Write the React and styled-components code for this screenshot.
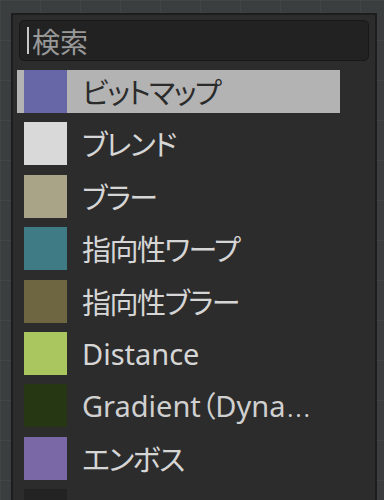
import React from "react";
import styled, { createGlobalStyle } from "styled-components";

const Global = createGlobalStyle`
  html, body { margin: 0; padding: 0; height: 100%; overflow: hidden; }
  body {
    background-color: #3b3e3e;
    background-image:
      linear-gradient(to right, rgba(255,255,255,0.035) 1px, transparent 1px),
      linear-gradient(to bottom, rgba(255,255,255,0.035) 1px, transparent 1px);
    background-size: 40px 40px;
    font-family: "Noto Sans CJK JP", "Noto Sans", sans-serif;
  }
`;

const Page = styled.div`
  padding: 13px 0 0 11px;
  height: 500px;
  box-sizing: border-box;
`;

const Panel = styled.div`
  width: 366px;
  height: 520px;
  box-sizing: border-box;
  background: #2c2c2c;
  border: 2px solid #1d1d1d;
  border-bottom: none;
  padding: 5px 6px 0 4px;
  display: flex;
  flex-direction: column;
  gap: 9px;
`;

const Search = styled.div`
  margin-left: 2px;
  width: 350px;
  height: 41px;
  box-sizing: border-box;
  border: 1px solid #181818;
  border-radius: 5px;
  background: #222222;
  display: flex;
  align-items: center;
  padding-left: 7px;
  gap: 3px;
`;

const Caret = styled.span`
  width: 2px;
  height: 27px;
  background: #c8c8c8;
`;

const Placeholder = styled.span`
  color: #999999;
  font-size: 28px;
  line-height: 1;
`;

const List = styled.div`
  display: flex;
  flex-direction: column;
  gap: 9.4px;
`;

const Row = styled.div`
  width: 323px;
  height: 43px;
  display: flex;
  align-items: center;
  padding-left: 7px;
  box-sizing: border-box;
  background: ${(p) => (p.$selected ? "#b3b3b3" : "transparent")};
  color: ${(p) => (p.$selected ? "#2b2b2b" : "#d6d6d6")};
`;

const Swatch = styled.span`
  flex: none;
  width: 43px;
  height: 43px;
  background: ${(p) => p.$color};
`;

const Label = styled.span`
  margin-left: 15px;
  font-size: 29px;
  line-height: 1;
  white-space: nowrap;
  font-family: ${(p) =>
    p.$latin
      ? '"Noto Sans", "Noto Sans CJK JP", sans-serif'
      : '"Noto Sans CJK JP", sans-serif'};
  font-feature-settings: "palt";
  letter-spacing: ${(p) => (p.$latin ? "0" : "-1.5px")};
  color: ${(p) => (p.$thin ? "#d0d0d0" : "inherit")};
`;

const Ellipsis = styled.span`
  font-family: "Noto Sans CJK JP", sans-serif;
  font-size: 22px;
  letter-spacing: -2px;
  margin-left: 1px;
`;

const items = [
  { label: "ビットマップ", color: "#6767a7", selected: true },
  { label: "ブレンド", color: "#d9d9d9" },
  { label: "ブラー", color: "#a9a387" },
  { label: "指向性ワープ", color: "#3e7b85" },
  { label: "指向性ブラー", color: "#6e6541" },
  { label: "Distance", color: "#a9c65f", latin: true },
  { label: "Gradient（Dyna", color: "#253813", latin: true, thin: true, more: true },
  { label: "エンボス", color: "#7a68a6" },
  { label: "", color: "#232323" },
];

export default function App() {
  return (
    <>
      <Global />
      <Page>
        <Panel>
          <Search>
            <Caret />
            <Placeholder>検索</Placeholder>
          </Search>
          <List>
            {items.map((it, i) => (
              <Row key={i} $selected={it.selected}>
                <Swatch $color={it.color} />
                {it.label && (
                  <Label $latin={it.latin} $thin={it.thin}>
                    {it.label}
                    {it.more && <Ellipsis>⋯</Ellipsis>}
                  </Label>
                )}
              </Row>
            ))}
          </List>
        </Panel>
      </Page>
    </>
  );
}
